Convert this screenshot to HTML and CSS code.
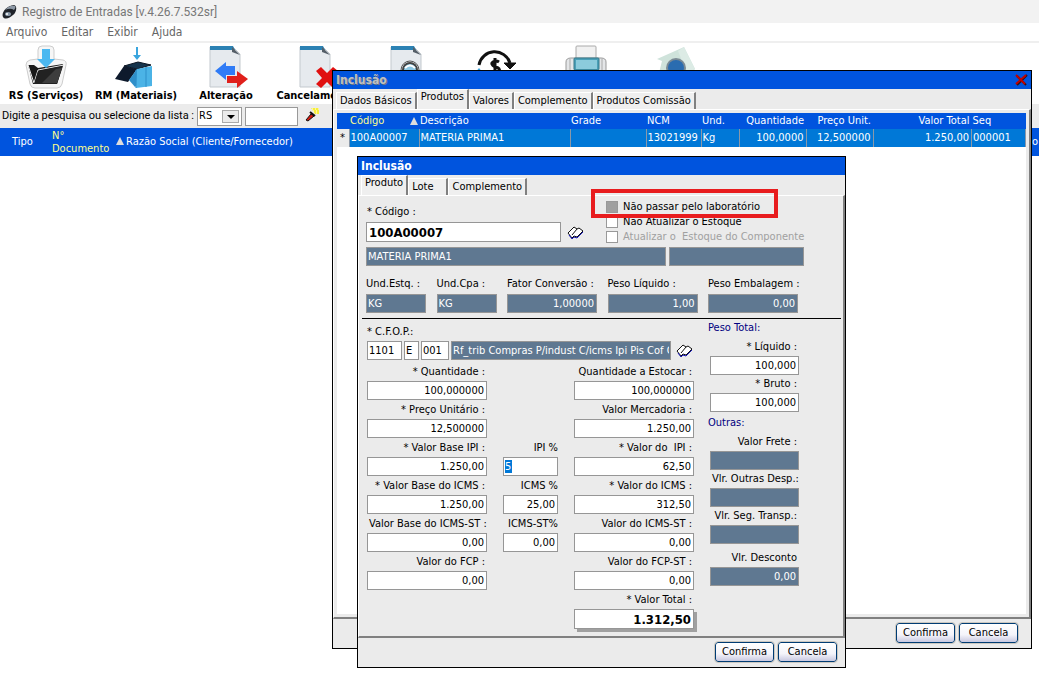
FILE: index.html
```html
<!DOCTYPE html>
<html lang="pt-BR">
<head>
    <meta charset="UTF-8">
    <meta name="viewport" content="width=device-width, initial-scale=1">
    <title>Registro de Entradas</title>
    <link rel="stylesheet" href="styles.css">
</head>
<body>
    <!-- Janela principal -->
    <header class="app-title">
        <svg width="16" height="16" viewBox="0 0 16 16">
            <path d="M2 13C0 9 5 2 13 1c4 1 2 8-1 10-3 3-8 5-10 2z" fill="#1f2329"/>
            <path d="M4 6c3-4 7-5 10-4 1 1 0 3-1 4-3-2-6-1-9 0z" fill="#8d98a5"/>
            <ellipse cx="7" cy="10" rx="3" ry="2" fill="#8796a5"/>
            <circle cx="6" cy="10" r="1" fill="#fff"/>
        </svg>
        <span>Registro de Entradas [v.4.26.7.532sr]</span>
    </header>
    <nav class="menu">
        <a href="#">Arquivo</a>
        <a href="#">Editar</a>
        <a href="#">Exibir</a>
        <a href="#">Ajuda</a>
    </nav>

    <div class="toolbar">
        <button class="tool">
            <svg width="44" height="44" viewBox="0 0 44 44">
                <path d="M14 5q0-4 4-4h8q4 0 4 4v9l9 1q4 1 3 5l-4 19q-1 4-5 4H11q-4 0-5-4L2 20q0-4 4-5l8-1z" fill="#f6f6f6" stroke="#cdcdcd"/>
                <path d="M4 20h6l4 3 25-4-6 20H9z" fill="#1a1a1a"/>
                <path d="M4 20l6 18 4-13 26-5" fill="none" stroke="#e8e8e8"/>
                <path d="M14 26l25-5-6 18H10z" fill="#222"/>
                <path d="M18 38l14-14 6-1-5 15z" fill="#3d3d3d"/>
                <path d="M18 4h8v10h5l-9 9-9-9h5z" fill="#4cb8f0"/>
            </svg>
            <span>RS (Serviços)</span>
        </button>
        <button class="tool">
            <svg width="44" height="44" viewBox="0 0 44 44">
                <path d="M22 2h2v8h3l-4 5-4-5h3z" fill="#3aa5de"/>
                <path d="M10 21l14-4 13 3-14 4z" fill="#16344c" stroke="#0b1422"/>
                <path d="M10 21l13 3-9 13-13-3z" fill="#0e1a2c"/>
                <path d="M23 24l-8 11 6 7 0 0 2-2z" fill="#2f8fc9"/>
                <path d="M23 24l15-3v20l-16 2z" fill="#4bb3e6"/>
                <path d="M22 25v18M32 22v20" stroke="#2f8fc9"/>
            </svg>
            <span>RM (Materiais)</span>
        </button>
        <button class="tool">
            <svg width="44" height="44" viewBox="0 0 44 44">
                <path d="M6 2h23l7 7v33H6z" fill="#e6eaee" stroke="#c3c9ce"/>
                <path d="M6 1h23l2 4H6z" fill="#2c82b4"/>
                <path d="M28 2l8 8-8-3z" fill="#555f68"/>
                <path d="M22 17v4h9v9h-9v5l-11-9z" fill="#2f7bf6"/>
                <path d="M33 26v5H23v7h10v5l11-9z" fill="#e0201b"/>
            </svg>
            <span>Alteração</span>
        </button>
        <button class="tool">
            <svg width="44" height="44" viewBox="0 0 44 44">
                <path d="M6 2h23l7 7v33H6z" fill="#e6eaee" stroke="#c3c9ce"/>
                <path d="M6 1h23l2 4H6z" fill="#2c82b4"/>
                <path d="M28 2l8 8-8-3z" fill="#555f68"/>
                <path d="M22 26l5-4 6 6 6-6 5 4-6 7 6 6-5 4-6-6-6 6-5-4 6-6z" fill="#e01010"/>
            </svg>
            <span>Cancelamento</span>
        </button>
        <button class="tool" aria-label="Consultar">
            <svg width="44" height="44" viewBox="0 0 44 44">
                <path d="M7 2h23l7 7v33H7z" fill="#e6eaee" stroke="#c3c9ce"/>
                <path d="M7 1h23l2 4H7z" fill="#2c82b4"/>
                <path d="M29 2l8 8-8-3z" fill="#555f68"/>
                <circle cx="26" cy="25" r="9" fill="#e6eaee" stroke="#555"/>
                <circle cx="26" cy="25" r="7" fill="#8cc8e4" stroke="#444" stroke-width="2"/>
                <path d="M21 23q5-5 10 0" fill="none" stroke="#fff" stroke-width="2"/>
            </svg>
        </button>
        <button class="tool" aria-label="Valores">
            <svg width="44" height="44" viewBox="0 0 44 44">
                <path d="M5 20A16 16 0 0 1 36 18" fill="none" stroke="#111" stroke-width="3"/>
                <path d="M30 18l6 6 6-6z" fill="#111" stroke="#111"/>
                <path d="M25 17q-3-2-6 0t2 5q6 1 4 5t-7 1M21 13v18" fill="none" stroke="#111" stroke-width="3"/>
                <path d="M1 28l4-5 4 5z" fill="#3aa5de"/>
            </svg>
        </button>
        <button class="tool" aria-label="Imprimir">
            <svg width="44" height="44" viewBox="0 0 44 44">
                <rect x="12" y="1" width="20" height="14" rx="1" fill="#f1f1f1" stroke="#aaa"/>
                <path d="M2 28V17q0-4 5-4h30q5 0 5 4v11z" fill="#e4e6e8" stroke="#999"/>
                <path d="M6 28V14M38 28V14" stroke="#aaa"/>
                <rect x="10" y="13" width="25" height="12" rx="1" fill="#4ba0b8" stroke="#36788a"/>
                <rect x="12" y="15" width="21" height="9" fill="#8ccbdc"/>
            </svg>
        </button>
        <button class="tool" aria-label="Foto">
            <svg width="44" height="44" viewBox="0 0 44 44">
                <path d="M3 14L30 2l11 22-4 4H5l3-12z" fill="#cfe3db"/>
                <path d="M30 2l11 22-8 4-9-22z" fill="#dcebe5"/>
                <circle cx="22" cy="23" r="10" fill="#7b8b95"/>
                <circle cx="22" cy="23" r="8" fill="#2a6cb0"/>
            </svg>
        </button>
    </div>

    <div class="search">
        <label for="tipo">Digite a pesquisa ou selecione da lista :</label>
        <span class="combo">
            <select id="tipo"><option>RS</option><option>RM</option></select>
        </span>
        <input class="search-text" type="text" aria-label="Pesquisa">
        <svg class="torch" width="14" height="14" viewBox="0 0 14 14">
            <path d="M6 0h8v6h-4z" fill="#f7ee3a"/>
            <path d="M7 1h1m2 0h1m2 0h1M8 3h1m2 0h1M11 5h1" stroke="#fff"/>
            <path d="M1 12l5-6 3 2-6 5z" fill="#d3180e" stroke="#111"/>
            <path d="M5 4l5 4" stroke="#111" stroke-width="2"/>
        </svg>
    </div>

    <div class="list-head">
        <span class="col-tipo">Tipo</span>
        <span class="col-doc">N°<br>Documento</span>
        <span class="col-razao"><i class="sort"></i>Razão Social (Cliente/Fornecedor)</span>
        <span class="col-last">o</span>
    </div>

    <!-- Inclusão da nota -->
    <section class="window window-nota">
        <div class="window-title inactive">
            <h2>Inclusão</h2>
            <button class="close" aria-label="Fechar">
                <svg width="14" height="12" viewBox="0 0 14 12">
                    <path d="M3 2l9 9M13 1L3 11" stroke="#301010" stroke-width="2"/>
                    <path d="M2 1l9 9M12 1L2 10" stroke="#c00000" stroke-width="2"/>
                </svg>
            </button>
        </div>
        <div class="tabs">
            <button class="tab">Dados Básicos</button>
            <button class="tab active">Produtos</button>
            <button class="tab">Valores</button>
            <button class="tab">Complemento</button>
            <button class="tab">Produtos Comissão</button>
        </div>
        <div class="page page-grid">
            <div class="sheet">
                <table class="grid">
                    <colgroup>
                        <col class="w-sel"><col class="w-cod"><col class="w-desc"><col class="w-grade"><col class="w-ncm">
                        <col class="w-und"><col class="w-qtd"><col class="w-preco"><col><col class="w-seq">
                    </colgroup>
                    <thead>
                        <tr>
                            <th></th>
                            <th class="sorted">Código<i class="sort"></i></th>
                            <th>Descrição</th>
                            <th>Grade</th>
                            <th>NCM</th>
                            <th>Und.</th>
                            <th class="num">Quantidade</th>
                            <th class="num">Preço Unit.</th>
                            <th class="num">Valor Total</th>
                            <th>Seq</th>
                        </tr>
                    </thead>
                    <tbody>
                        <tr>
                            <td class="mark">*</td>
                            <td>100A00007</td>
                            <td>MATERIA PRIMA1</td>
                            <td></td>
                            <td>13021999</td>
                            <td>Kg</td>
                            <td class="num">100,0000</td>
                            <td class="num">12,500000</td>
                            <td class="num">1.250,00</td>
                            <td>000001</td>
                        </tr>
                    </tbody>
                </table>
            </div>
        </div>
        <div class="actions">
            <button class="btn">Confirma</button>
            <button class="btn">Cancela</button>
        </div>
    </section>

    <!-- Inclusão do produto -->
    <section class="window window-produto">
        <div class="window-title"><h2>Inclusão</h2></div>
        <div class="tabs">
            <button class="tab active">Produto</button>
            <button class="tab tab-lote">Lote</button>
            <button class="tab">Complemento</button>
        </div>
        <form class="page page-form">
            <div class="top">
                <div class="codigo">
                    <label for="codigo">* Código :</label>
                    <div class="line">
                        <input id="codigo" class="field big" type="text" value="100A00007">
                        <svg class="book" width="17" height="15" viewBox="0 0 17 15">
                            <path d="M1 8l6-6 3 2 2-1 4 3-6 6-3-1-2 2z" fill="#fff" stroke="#111"/>
                            <path d="M2 10l3 4 2-2 3 1 6-6" fill="none" stroke="#1414b4"/>
                            <path d="M10 4L5 10" stroke="#111"/>
                        </svg>
                    </div>
                </div>
                <div class="checks">
                    <label><input type="checkbox" class="grayed">Não passar pelo laboratório</label>
                    <label><input type="checkbox">Não Atualizar o Estoque</label>
                    <label class="off"><input type="checkbox" disabled>Atualizar o&nbsp; Estoque do Componente</label>
                    <div class="highlight"></div>
                </div>
            </div>

            <div class="line desc">
                <input class="field ro w300" type="text" value="MATERIA PRIMA1" readonly aria-label="Descrição">
                <input class="field ro w135" type="text" readonly aria-label="Grade">
            </div>

            <div class="units">
                <div class="w60"><label for="estq">Und.Estq. :</label><input id="estq" class="field ro" value="KG" readonly></div>
                <div class="w60"><label for="cpa">Und.Cpa :</label><input id="cpa" class="field ro" value="KG" readonly></div>
                <div class="w90"><label for="fator">Fator Conversão :</label><input id="fator" class="field ro num" value="1,00000" readonly></div>
                <div class="w90"><label for="pliq">Peso Líquido :</label><input id="pliq" class="field ro num" value="1,00" readonly></div>
                <div class="w90"><label for="pemb">Peso Embalagem :</label><input id="pemb" class="field ro num" value="0,00" readonly></div>
            </div>

            <div class="bottom">
                <div class="main">
                    <label class="cfop-label" for="cfop">* C.F.O.P.:</label>
                    <div class="line cfop">
                        <input id="cfop" class="field w35" value="1101">
                        <input class="field w15" value="E" aria-label="Tipo">
                        <input class="field w28" value="001" aria-label="Sequência">
                        <input class="field ro w220" value="Rf_trib Compras P/indust C/icms Ipi Pis Cof C" readonly aria-label="Natureza">
                        <svg class="book" width="17" height="15" viewBox="0 0 17 15">
                            <path d="M1 8l6-6 3 2 2-1 4 3-6 6-3-1-2 2z" fill="#fff" stroke="#111"/>
                            <path d="M2 10l3 4 2-2 3 1 6-6" fill="none" stroke="#1414b4"/>
                            <path d="M10 4L5 10" stroke="#111"/>
                        </svg>
                    </div>
                    <div class="values">
                        <div class="c1"><label for="qtd">* Quantidade :</label><input id="qtd" class="field num" value="100,000000"></div>
                        <div class="c3"><label for="estocar">Quantidade a Estocar :</label><input id="estocar" class="field num" value="100,000000"></div>

                        <div class="c1"><label for="preco">* Preço Unitário :</label><input id="preco" class="field num" value="12,500000"></div>
                        <div class="c3"><label for="merc">Valor Mercadoria :</label><input id="merc" class="field num" value="1.250,00"></div>

                        <div class="c1"><label for="bipi">* Valor Base IPI :</label><input id="bipi" class="field num" value="1.250,00"></div>
                        <div class="c2"><label for="pipi">IPI %</label><input id="pipi" class="field editing" value="5"></div>
                        <div class="c3"><label for="vipi">* Valor do&nbsp; IPI :</label><input id="vipi" class="field num" value="62,50"></div>

                        <div class="c1"><label for="bicms">* Valor Base do ICMS :</label><input id="bicms" class="field num" value="1.250,00"></div>
                        <div class="c2"><label for="picms">ICMS %</label><input id="picms" class="field num" value="25,00"></div>
                        <div class="c3"><label for="vicms">* Valor do ICMS :</label><input id="vicms" class="field num" value="312,50"></div>

                        <div class="c1"><label for="bst">Valor Base do ICMS-ST :</label><input id="bst" class="field num" value="0,00"></div>
                        <div class="c2"><label for="pst">ICMS-ST%</label><input id="pst" class="field num" value="0,00"></div>
                        <div class="c3"><label for="vst">Valor do ICMS-ST :</label><input id="vst" class="field num" value="0,00"></div>

                        <div class="c1"><label for="fcp">Valor do FCP :</label><input id="fcp" class="field num" value="0,00"></div>
                        <div class="c3"><label for="fcpst">Valor do FCP-ST :</label><input id="fcpst" class="field num" value="0,00"></div>

                        <div class="c3"><label for="total">* Valor Total :</label><input id="total" class="field big num total" value="1.312,50"></div>
                    </div>
                </div>

                <div class="side">
                    <h3>Peso Total:</h3>
                    <label for="liq">* Líquido :</label><input id="liq" class="field num" value="100,000">
                    <label for="bruto">* Bruto :</label><input id="bruto" class="field num" value="100,000">
                    <h3 class="outras">Outras:</h3>
                    <label for="frete">Valor Frete :</label><input id="frete" class="field ro num" readonly>
                    <label for="desp">Vlr. Outras Desp.:</label><input id="desp" class="field ro num" readonly>
                    <label for="seg">Vlr. Seg. Transp.:</label><input id="seg" class="field ro num" readonly>
                    <label class="desconto" for="descto">Vlr. Desconto</label><input id="descto" class="field ro num" value="0,00" readonly>
                </div>
            </div>
        </form>
        <div class="actions">
            <button class="btn">Confirma</button>
            <button class="btn">Cancela</button>
        </div>
    </section>
</body>
</html>
```

FILE: styles.css
```css
* {
    box-sizing: border-box;
}
body {
    margin: 0;
    min-height: 100vh;
    position: relative;
    overflow: hidden;
    background: #fff;
    color: #000;
    font-family: Tahoma, "DejaVu Sans Condensed", sans-serif;
    font-size: 11px;
    line-height: 14px;
}
button, input, select {
    font: inherit;
    color: inherit;
}
button {
    padding: 0;
    border: 0;
    background: none;
}
label {
    white-space: nowrap;
}

/* Janela principal */
.app-title {
    display: flex;
    align-items: center;
    gap: 5px;
    height: 23px;
    padding-left: 1px;
    background: #f2f2f2;
    color: #777;
    font-family: Roboto, sans-serif;
    font-size: 12px;
}
.menu {
    display: flex;
    align-items: center;
    gap: 14px;
    height: 20px;
    padding: 0 6px;
    border-bottom: 2px solid #efefef;
    font-size: 12px;
}
.menu a {
    color: #666;
    text-decoration: none;
}
.toolbar {
    display: flex;
    height: 61px;
    padding-left: 1px;
}
.tool {
    display: flex;
    flex-direction: column;
    align-items: center;
    flex: none;
    width: 90px;
    padding-top: 2px;
    font-weight: bold;
    white-space: nowrap;
}
.search {
    display: flex;
    align-items: center;
    gap: 3px;
    height: 24px;
    padding-left: 2px;
    background: #ebebeb;
}
.search label {
    font-family: Roboto, sans-serif;
}
.combo {
    position: relative;
    width: 45px;
    height: 19px;
    border: 1px solid #999;
    background: #fff;
}
.combo select {
    width: 100%;
    height: 100%;
    padding: 0 1px;
    border: 0;
    background: none;
    appearance: none;
}
.combo::before {
    content: "";
    position: absolute;
    right: 2px;
    top: 2px;
    bottom: 2px;
    width: 15px;
    border: 1px solid #aaa;
    background: #ebebeb;
}
.combo::after {
    content: "";
    position: absolute;
    right: 6px;
    top: 7px;
    border: 4px solid transparent;
    border-top-color: #000;
    border-bottom: 0;
}
.search-text {
    width: 53px;
    height: 19px;
    border: 1px solid #999;
    background: #fff;
}
.torch {
    margin: 0 0 2px 4px;
}
.list-head {
    display: flex;
    align-items: center;
    height: 28px;
    background: #0054de;
    color: #fff;
}
.col-tipo {
    width: 52px;
    padding-left: 12px;
}
.col-doc {
    width: 64px;
    color: #ffff8c;
    line-height: 13px;
}
.col-last {
    width: 7px;
    margin-left: auto;
    overflow: hidden;
}
.sort {
    display: inline-block;
    margin-right: 2px;
    border: 4px solid transparent;
    border-top: 0;
    border-bottom: 8px solid #ddd;
}

/* Janelas */
.window {
    position: absolute;
    display: flex;
    flex-direction: column;
    border: 1px solid #000;
    background: #ebebeb;
}
.window-nota {
    left: 332px;
    right: 7px;
    top: 70px;
}
.window-produto {
    left: 357px;
    top: 156px;
    width: 489px;
}
.window-title {
    display: flex;
    align-items: center;
    justify-content: space-between;
    height: 18px;
    padding: 0 3px;
    background: #0054de;
    color: #fff;
}
.window-title h2 {
    margin: 0;
    font-size: 12px;
    font-weight: bold;
}
.inactive h2 {
    color: #c0c0c0;
    text-shadow: 1px 1px 0 #6c7688;
}
.close {
    display: flex;
}
.tabs {
    display: flex;
    align-items: flex-end;
    height: 20px;
    padding-left: 3px;
}
.tab {
    height: 17px;
    padding: 0 3px;
    border-top: 1px solid #fff;
    border-left: 1px solid #fff;
    border-right: 2px solid #808080;
    background: #efefef;
    white-space: nowrap;
}
.tab.active {
    height: 20px;
    padding-bottom: 5px;
}
.tab-lote {
    padding-right: 13px;
}
.page {
    border-top: 1px solid #fff;
    border-left: 1px solid #fff;
    border-right: 2px solid #808080;
    border-bottom: 2px solid #808080;
}
.actions {
    display: flex;
    justify-content: flex-end;
    gap: 4px;
    padding: 4px 13px 5px;
}
.window-produto .actions {
    padding: 4px 8px 5px;
}
.btn {
    width: 59px;
    height: 20px;
    border: 1px solid #003c74;
    border-radius: 3px;
    outline: 1px solid #ccc8c0;
    background: linear-gradient(#fff, #f4f4fa 60%, #c8c8e0);
}

/* Itens da nota */
.page-grid {
    padding: 3px;
}
.sheet {
    height: 501px;
    background: #fff;
}
.grid {
    width: 100%;
    border-collapse: collapse;
    table-layout: fixed;
    color: #fff;
}
.grid th, .grid td {
    padding: 0 1px;
    font-weight: normal;
    text-align: left;
    white-space: nowrap;
    overflow: hidden;
}
.grid th {
    height: 16px;
    background: #0054de;
}
.grid td {
    height: 18px;
    border-right: 1px solid #8a98a8;
    background: #0078d7;
}
.grid .num {
    padding-right: 2px;
    text-align: right;
}
.grid .sorted {
    color: #ffff8c;
}
.grid .sort {
    float: right;
    margin: 3px 0 0;
}
.grid .mark {
    padding-left: 3px;
    background: #ebebeb;
    color: #000;
}
.w-sel { width: 12px; }
.w-cod { width: 70px; }
.w-desc { width: 151px; }
.w-grade { width: 76px; }
.w-ncm { width: 55px; }
.w-und { width: 38px; }
.w-qtd { width: 67px; }
.w-preco { width: 67px; }
.w-seq { width: 54px; }

/* Formulário do produto */
.page-form {
    padding: 0 2px 0 3px;
}
.field {
    display: block;
    height: 19px;
    padding: 0 1px;
    border: 1px solid #969696;
    border-radius: 0;
    background: #fff;
    outline: none;
}
.field.ro {
    background: #5f7891;
    color: #fff;
}
.field.num {
    padding-right: 2px;
    text-align: right;
}
.field.big {
    height: 20px;
    padding: 0 2px;
    font-size: 13px;
    font-weight: bold;
}
.line {
    display: flex;
    align-items: center;
    gap: 3px;
}
.top {
    display: flex;
    height: 50px;
    padding-left: 4px;
}
.codigo {
    width: 240px;
    padding-top: 9px;
}
.codigo label {
    display: block;
    height: 17px;
    padding-left: 1px;
}
.codigo .field {
    width: 195px;
}
.codigo .line {
    gap: 6px;
}
.checks {
    position: relative;
    padding-top: 3px;
}
.checks label {
    display: flex;
    align-items: center;
    gap: 5px;
    height: 15px;
}
.checks input {
    width: 12px;
    height: 12px;
    margin: 0;
    border: 1px solid #999;
    background: #fff;
    appearance: none;
}
.checks .grayed {
    background: #a0a0a0;
}
.off {
    color: #a0a0a0;
}
.highlight {
    position: absolute;
    left: -15px;
    top: -7px;
    width: 187px;
    height: 29px;
    border: 4px solid #e81c1e;
}
.desc {
    padding: 1px 4px 0;
}
.units {
    display: grid;
    grid-template-columns: 60px 60px 90px 90px 90px;
    justify-content: space-between;
    padding: 11px 43px 5px 4px;
    border-bottom: 1px solid #000;
}
.units label {
    display: block;
    height: 17px;
}
.units .field {
    width: 100%;
}
.w15 { width: 15px; }
.w28 { width: 28px; }
.w35 { width: 35px; }
.w60 { width: 60px; }
.w90 { width: 90px; }
.w135 { width: 135px; }
.w220 { width: 220px; }
.w300 { width: 300px; }

.bottom {
    display: flex;
    gap: 17px;
    padding: 0 5px 7px;
}
.main {
    width: 326px;
    padding-top: 6px;
}
.cfop-label {
    display: block;
    height: 16px;
}
.cfop {
    gap: 2px;
}
.cfop .field {
    flex: none;
}
.cfop .book {
    flex: none;
    margin-left: 3px;
}
.values {
    display: grid;
    grid-template-columns: 120px 55px 120px;
    column-gap: 16px;
    row-gap: 1px;
    padding-top: 3px;
}
.values label,
.side label {
    display: block;
    height: 18px;
    padding: 2px 2px 0;
    text-align: right;
}
.values .field,
.side .field {
    width: 100%;
}
.c1 { grid-column: 1; }
.c2 { grid-column: 2; }
.c3 { grid-column: 3; }
.c2 label {
    padding: 2px 0 0;
}
.editing {
    color: #fff;
    background: linear-gradient(#0078d7, #0078d7) 1px 2px / 7px 13px no-repeat #fff;
}
.field.total {
    box-shadow: 3px 3px 0 #a0a0a0;
}
.side {
    width: 89px;
}
.side h3 {
    height: 19px;
    margin: 0 0 0 -2px;
    padding-top: 2px;
    color: #000080;
    font-size: 11px;
    font-weight: normal;
}
.side .outras {
    height: 21px;
    padding-top: 4px;
}
.side .desconto {
    height: 23px;
    padding-top: 7px;
}
```
